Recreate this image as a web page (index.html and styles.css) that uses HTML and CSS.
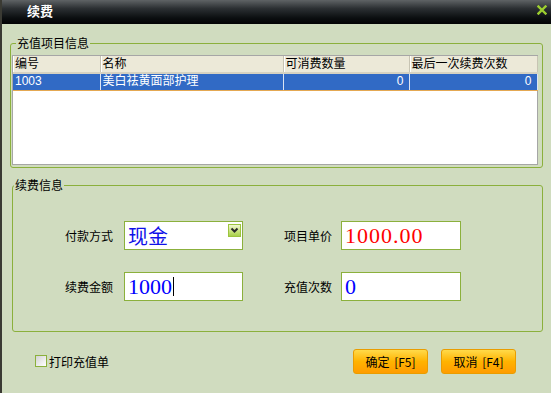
FILE: index.html
```html
<!DOCTYPE html>
<html lang="zh-CN">
<head>
    <meta charset="UTF-8">
    <title>续费</title>
    <link rel="stylesheet" href="styles.css">
</head>
<body>
    <div class="window">
        <div class="titlebar">
            <span class="title">续费</span>
            <svg class="close" width="10" height="10" viewBox="0 0 10 10">
                <path d="M1.5 1.5 L8.5 8.5 M8.5 1.5 L1.5 8.5" stroke="#9dcf2f" stroke-width="2.4" stroke-linecap="square"/>
            </svg>
        </div>

        <fieldset class="group items">
            <legend>充值项目信息</legend>
            <div class="grid-box">
                <table class="grid">
                    <colgroup>
                        <col style="width:87px">
                        <col style="width:183px">
                        <col style="width:126px">
                        <col style="width:128px">
                    </colgroup>
                    <thead>
                        <tr><th>编号</th><th>名称</th><th>可消费数量</th><th>最后一次续费次数</th></tr>
                    </thead>
                    <tbody>
                        <tr class="selected"><td>1003</td><td>美白祛黄面部护理</td><td class="num">0</td><td class="num">0</td></tr>
                    </tbody>
                </table>
            </div>
        </fieldset>

        <fieldset class="group renew">
            <legend>续费信息</legend>
            <div class="form-row">
                <label class="field-label">付款方式</label>
                <div class="box select">
                    <span class="cash">现金</span>
                    <span class="drop">
                        <svg width="11" height="11" viewBox="0 0 11 11">
                            <path d="M2.5 3.5 L5.5 6.5 L8.5 3.5" fill="none" stroke="#2b2b2b" stroke-width="2"/>
                        </svg>
                    </span>
                </div>
                <label class="field-label second">项目单价</label>
                <div class="box wide"><span class="val red">1000.00</span></div>
            </div>
            <div class="form-row">
                <label class="field-label">续费金额</label>
                <div class="box"><span class="val blue">1000</span><span class="caret"></span></div>
                <label class="field-label second">充值次数</label>
                <div class="box wide"><span class="val blue">0</span></div>
            </div>
        </fieldset>

        <div class="footer">
            <label class="check"><span class="checkbox"></span>打印充值单</label>
            <div class="buttons">
                <button>确定 [F5]</button>
                <button>取消 [F4]</button>
            </div>
        </div>
    </div>
</body>
</html>
```

FILE: styles.css
```css
* { box-sizing: border-box; }
body { margin: 0; font-family: "Noto Sans CJK SC", sans-serif; font-size: 12px; color: #000; }

.window { width: 551px; height: 393px; background: #d0dcbf; border-left: 2px solid #3a3a33; overflow: hidden; }

.titlebar { height: 24px; display: flex; justify-content: space-between; align-items: flex-start; padding: 3px 4px 0 25px; background: linear-gradient(to bottom, #5f6365 0%, #2c3033 35%, #0b0e10 75%, #020304 100%); color: #fff; }
.title { font-size: 13px; font-weight: bold; line-height: 15px; }
.close { margin-top: 2px; }

.group { margin: 0; border: 1px solid #8bb03c; border-radius: 3px; min-width: 0; }
.group legend { font-size: 12px; line-height: 14px; padding: 0 1px; }
.items { margin: 12px 0 0 8px; width: 533px; padding: 5px 4px 2px 1px; }
.items legend { margin-left: 4px; }
.renew { margin: 10px 0 0 10px; width: 531px; padding: 29px 0 30px 0; }
.renew legend { margin-left: 1px; }

.grid-box { height: 110px; background: #fff; border: 1px solid #a6a6a6; }
.grid { width: 100%; border-collapse: collapse; table-layout: fixed; font-family: "Liberation Sans", "Noto Sans CJK SC", sans-serif; font-size: 12px; }
.grid th { height: 17px; padding: 0 2px; background: #ece9d8; font-weight: normal; text-align: left; border-right: 1px solid #c7c4b3; border-bottom: 2px solid #d6d2c1; box-shadow: inset 1px 0 #fff; white-space: nowrap; overflow: hidden; line-height: 15px; }
.grid td { height: 17px; padding: 0 2px; background: #316ac5; color: #fff; border-top: 1px solid #e4a852; border-bottom: 1px solid #e4a852; border-right: 1px solid #dbe4f3; white-space: nowrap; line-height: 15px; }
.grid td.num { text-align: right; padding-right: 5px; }

.form-row { display: flex; align-items: center; height: 29px; }
.form-row + .form-row { margin-top: 22px; }
.field-label { width: 111px; padding-right: 11px; text-align: right; }
.field-label.second { width: 98px; padding-right: 9px; }

.box { width: 119px; height: 29px; border: 1px solid #8bb03c; background: #fff; display: flex; align-items: center; padding-left: 3px; }
.box.wide { width: 120px; }
.select { justify-content: space-between; align-items: flex-start; }
.cash { font-size: 20px; line-height: 27px; color: #1010e8; }
.drop { width: 13px; height: 13px; margin: 2px 1px 0 0; display: flex; align-items: center; justify-content: center; border: 1px solid #9cc43e; background: linear-gradient(to bottom, #f1f9d2, #c6e27a 60%, #a9cf4c); }

.val { font-family: "Liberation Serif", serif; font-size: 22px; line-height: 1; }
.red { color: #ff0000; letter-spacing: 1px; }
.blue { color: #0000ff; }
.caret { width: 1px; height: 19px; margin-left: 1px; background: #000; }

.footer { display: flex; align-items: center; height: 26px; margin-top: 16px; padding: 0 35px 0 33px; }
.check { display: flex; align-items: center; }
.checkbox { width: 12px; height: 12px; margin-right: 2px; border: 1px solid #8bb03c; background: linear-gradient(135deg, #d2d2d2, #ffffff); }
.buttons { margin-left: auto; display: flex; gap: 13px; }
.buttons button { width: 75px; height: 25px; padding: 0; border: 1px solid #e99d00; border-radius: 3px; background: linear-gradient(to bottom, #ffda4a 0%, #ffb300 50%, #ff9c00 100%); font-family: "Noto Sans CJK SC", sans-serif; font-size: 12px; color: #000; word-spacing: 2px; }
```
